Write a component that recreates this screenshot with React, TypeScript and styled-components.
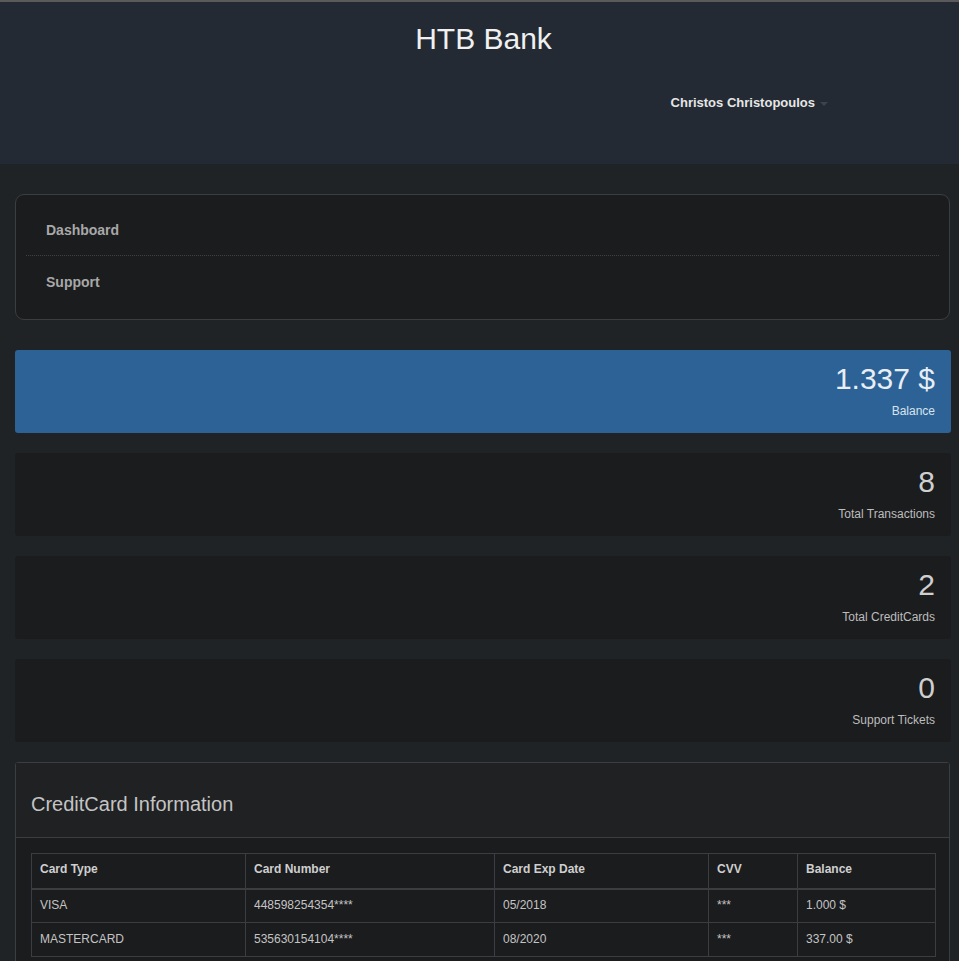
import React from "react";
import styled, { createGlobalStyle } from "styled-components";

const Global = createGlobalStyle`
  html, body { margin: 0; padding: 0; background: #202325; }
  body { font-family: "Liberation Sans", Arial, sans-serif; color: #c8c8c8; }
  * { box-sizing: border-box; }
`;

const Header = styled.header`
  height: 164px;
  background: #232a33;
  border-top: 2px solid #5a5a5a;
  display: flex;
  flex-direction: column;
`;

const Brand = styled.h1`
  margin: 0;
  padding-top: 20px;
  padding-left: 8px;
  text-align: center;
  font-weight: 400;
  font-size: 30px;
  line-height: 34px;
  color: #f0f0f0;
`;

const UserBar = styled.div`
  display: flex;
  justify-content: flex-end;
  padding-right: 131px;
  margin-top: 39px;
`;

const UserName = styled.span`
  font-size: 13px;
  font-weight: 700;
  color: #e6e6e6;
  display: flex;
  align-items: center;
  gap: 5px;
`;

const Caret = styled.span`
  width: 0;
  height: 0;
  border-left: 4px solid transparent;
  border-right: 4px solid transparent;
  border-top: 4px solid #3a4350;
  margin-top: 3px;
`;

const Main = styled.main`
  padding: 30px 8px 0 15px;
  display: flex;
  flex-direction: column;
  gap: 20px;
`;

const NavCard = styled.nav`
  margin-right: 1px;
  background: #1b1c1e;
  border: 1px solid #3b3d40;
  border-radius: 9px;
  padding: 9px 10px 11px 10px;
  display: flex;
  flex-direction: column;
  margin-bottom: 10px;
`;

const NavItem = styled.div<{ $sep?: boolean }>`
  height: 52px;
  display: flex;
  align-items: center;
  padding-left: 20px;
  font-size: 14px;
  font-weight: 700;
  color: #a8a8a8;
  border-bottom: ${(p) => (p.$sep ? "1px dotted #3e4043" : "none")};
`;

const Stat = styled.div<{ $primary?: boolean }>`
  height: 83px;
  border-radius: 3px;
  background: ${(p) => (p.$primary ? "#2c6295" : "#1b1c1e")};
  padding: 12px 16px 0 16px;
  display: flex;
  flex-direction: column;
  align-items: flex-end;
`;

const StatValue = styled.div<{ $primary?: boolean }>`
  font-size: 30px;
  line-height: 34px;
  color: ${(p) => (p.$primary ? "#e8eef5" : "#cfcfcf")};
`;

const StatLabel = styled.div<{ $primary?: boolean }>`
  margin-top: 8px;
  font-size: 12px;
  color: ${(p) => (p.$primary ? "#d9e3ee" : "#bdbdbd")};
`;

const Panel = styled.section`
  margin-right: 1px;
  border: 1px solid #3b3d40;
  border-radius: 3px 3px 0 0;
  background: #1b1c1e;
`;

const PanelHead = styled.div`
  height: 75px;
  background: #1f2123;
  border-bottom: 1px solid #3b3d40;
  display: flex;
  align-items: center;
  padding-left: 15px;
  padding-top: 8px;
  font-size: 20px;
  color: #c4c4c4;
`;

const PanelBody = styled.div`
  padding: 15px 15px 10px 15px;
`;

const Table = styled.table`
  width: 100%;
  border-collapse: collapse;
  font-size: 12px;
  color: #c4c4c4;
  table-layout: fixed;
`;

const Th = styled.th<{ $w: number }>`
  width: ${(p) => p.$w}px;
  text-align: left;
  font-weight: 700;
  height: 35px;
  padding: 0 8px 4px 8px;
  border: 1px solid #3b3d40;
  border-bottom: 2px solid #3b3d40;
  color: #cfcfcf;
`;

const Td = styled.td`
  height: 34px;
  padding: 0 8px 2px 8px;
  border: 1px solid #3b3d40;
`;

const stats = [
  { value: "1.337 $", label: "Balance", primary: true },
  { value: "8", label: "Total Transactions" },
  { value: "2", label: "Total CreditCards" },
  { value: "0", label: "Support Tickets" },
];

const cols = [
  { name: "Card Type", w: 214 },
  { name: "Card Number", w: 249 },
  { name: "Card Exp Date", w: 214 },
  { name: "CVV", w: 89 },
  { name: "Balance", w: 138 },
];

const cards = [
  { type: "VISA", num: "448598254354****", exp: "05/2018", bal: "1.000 $" },
  { type: "MASTERCARD", num: "535630154104****", exp: "08/2020", bal: "337.00 $" },
];

export default function App() {
  return (
    <>
      <Global />
      <Header>
        <Brand>HTB Bank</Brand>
        <UserBar>
          <UserName>
            Christos Christopoulos <Caret />
          </UserName>
        </UserBar>
      </Header>
      <Main>
        <NavCard>
          <NavItem $sep>Dashboard</NavItem>
          <NavItem>Support</NavItem>
        </NavCard>
        {stats.map((s) => (
          <Stat key={s.label} $primary={s.primary}>
            <StatValue $primary={s.primary}>{s.value}</StatValue>
            <StatLabel $primary={s.primary}>{s.label}</StatLabel>
          </Stat>
        ))}
        <Panel>
          <PanelHead>CreditCard Information</PanelHead>
          <PanelBody>
            <Table>
              <thead>
                <tr>
                  {cols.map((c) => (
                    <Th key={c.name} $w={c.w}>
                      {c.name}
                    </Th>
                  ))}
                </tr>
              </thead>
              <tbody>
                {cards.map((c) => (
                  <tr key={c.type}>
                    <Td>{c.type}</Td>
                    <Td>{c.num}</Td>
                    <Td>{c.exp}</Td>
                    <Td>***</Td>
                    <Td>{c.bal}</Td>
                  </tr>
                ))}
              </tbody>
            </Table>
          </PanelBody>
        </Panel>
      </Main>
    </>
  );
}
